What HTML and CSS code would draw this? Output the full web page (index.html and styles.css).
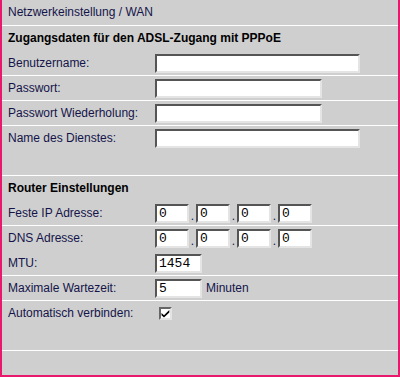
FILE: index.html
```html
<!DOCTYPE html>
<html lang="de">
<head>
    <meta charset="UTF-8">
    <title>Netzwerkeinstellung / WAN</title>
    <link rel="stylesheet" href="styles.css">
</head>
<body>
    <div class="panel">
        <div class="title">Netzwerkeinstellung / WAN</div>

        <div class="row section">Zugangsdaten für den ADSL-Zugang mit PPPoE</div>
        <div class="row line">
            <label class="label" for="user">Benutzername:</label>
            <div class="field"><input type="text" id="user" class="text wide"></div>
        </div>
        <div class="row line">
            <label class="label" for="pass">Passwort:</label>
            <div class="field"><input type="password" id="pass" class="text mid"></div>
        </div>
        <div class="row line">
            <label class="label" for="pass2">Passwort Wiederholung:</label>
            <div class="field"><input type="password" id="pass2" class="text mid"></div>
        </div>
        <div class="row line tall">
            <label class="label" for="service">Name des Dienstes:</label>
            <div class="field"><input type="text" id="service" class="text wide"></div>
        </div>

        <div class="row section">Router Einstellungen</div>
        <div class="row line">
            <label class="label">Feste IP Adresse:</label>
            <div class="field">
                <input type="text" class="text ip" value="0"><span class="dot">.</span>
                <input type="text" class="text ip" value="0"><span class="dot">.</span>
                <input type="text" class="text ip" value="0"><span class="dot">.</span>
                <input type="text" class="text ip" value="0">
            </div>
        </div>
        <div class="row">
            <label class="label">DNS Adresse:</label>
            <div class="field">
                <input type="text" class="text ip" value="0"><span class="dot">.</span>
                <input type="text" class="text ip" value="0"><span class="dot">.</span>
                <input type="text" class="text ip" value="0"><span class="dot">.</span>
                <input type="text" class="text ip" value="0">
            </div>
        </div>
        <div class="row line">
            <label class="label" for="mtu">MTU:</label>
            <div class="field"><input type="text" id="mtu" class="text short" value="1454"></div>
        </div>
        <div class="row line">
            <label class="label" for="wait">Maximale Wartezeit:</label>
            <div class="field"><input type="text" id="wait" class="text short" value="5"><span class="unit">Minuten</span></div>
        </div>
        <div class="row line tall">
            <span class="label">Automatisch verbinden:</span>
            <div class="field">
                <span class="check">
                    <svg width="9" height="9" viewBox="0 0 9 9"><path d="M0.5 4 L3 6.3 L8.3 1 L8.3 3.4 L3 8.6 L0.5 6.2 Z" fill="#000"/></svg>
                </span>
            </div>
        </div>
        <div class="row foot"></div>
    </div>
</body>
</html>
```

FILE: styles.css
```css
body {
    margin: 0;
    font-family: "Liberation Sans", Arial, sans-serif;
    font-size: 12px;
}
.panel {
    width: 396px;
    height: 375px;
    background-color: #cfcfcf;
    border: 2px solid #e8186c;
    border-top: none;
    color: #14144a;
}
.title {
    height: 25px;
    line-height: 25px;
    padding-left: 6px;
    border-bottom: 1px solid #fff;
}
.row {
    display: flex;
    align-items: flex-start;
    height: 24px;
    border-bottom: 1px solid transparent;
}
.row.line {
    border-bottom-color: #fff;
}
.row.tall {
    height: 49px;
}
.row.foot {
    height: 23px;
}
.section {
    padding-left: 6px;
    line-height: 24px;
    font-weight: bold;
    color: #000;
}
.label {
    width: 147px;
    padding-left: 6px;
    line-height: 24px;
    flex-shrink: 0;
}
.field {
    display: flex;
    align-items: center;
    height: 24px;
}
.text {
    box-sizing: border-box;
    height: 19px;
    margin: 0;
    padding: 0 2px;
    border: 2px solid;
    border-color: #555 #e4e4e4 #e4e4e4 #555;
    background-color: #fff;
    font-family: "Liberation Mono", "Courier New", monospace;
    font-size: 13px;
    color: #000;
    outline: none;
}
.wide {
    width: 205px;
}
.mid {
    width: 167px;
}
.ip {
    width: 34px;
}
.short {
    width: 47px;
}
.dot {
    width: 7px;
    text-align: center;
    align-self: flex-end;
    line-height: 17px;
}
.unit {
    margin-left: 4px;
}
.check {
    box-sizing: border-box;
    width: 13px;
    height: 13px;
    margin-left: 4px;
    border: 2px solid;
    border-color: #666 #e4e4e4 #e4e4e4 #666;
    background-color: #fff;
    display: flex;
    align-items: center;
    justify-content: center;
}
```
